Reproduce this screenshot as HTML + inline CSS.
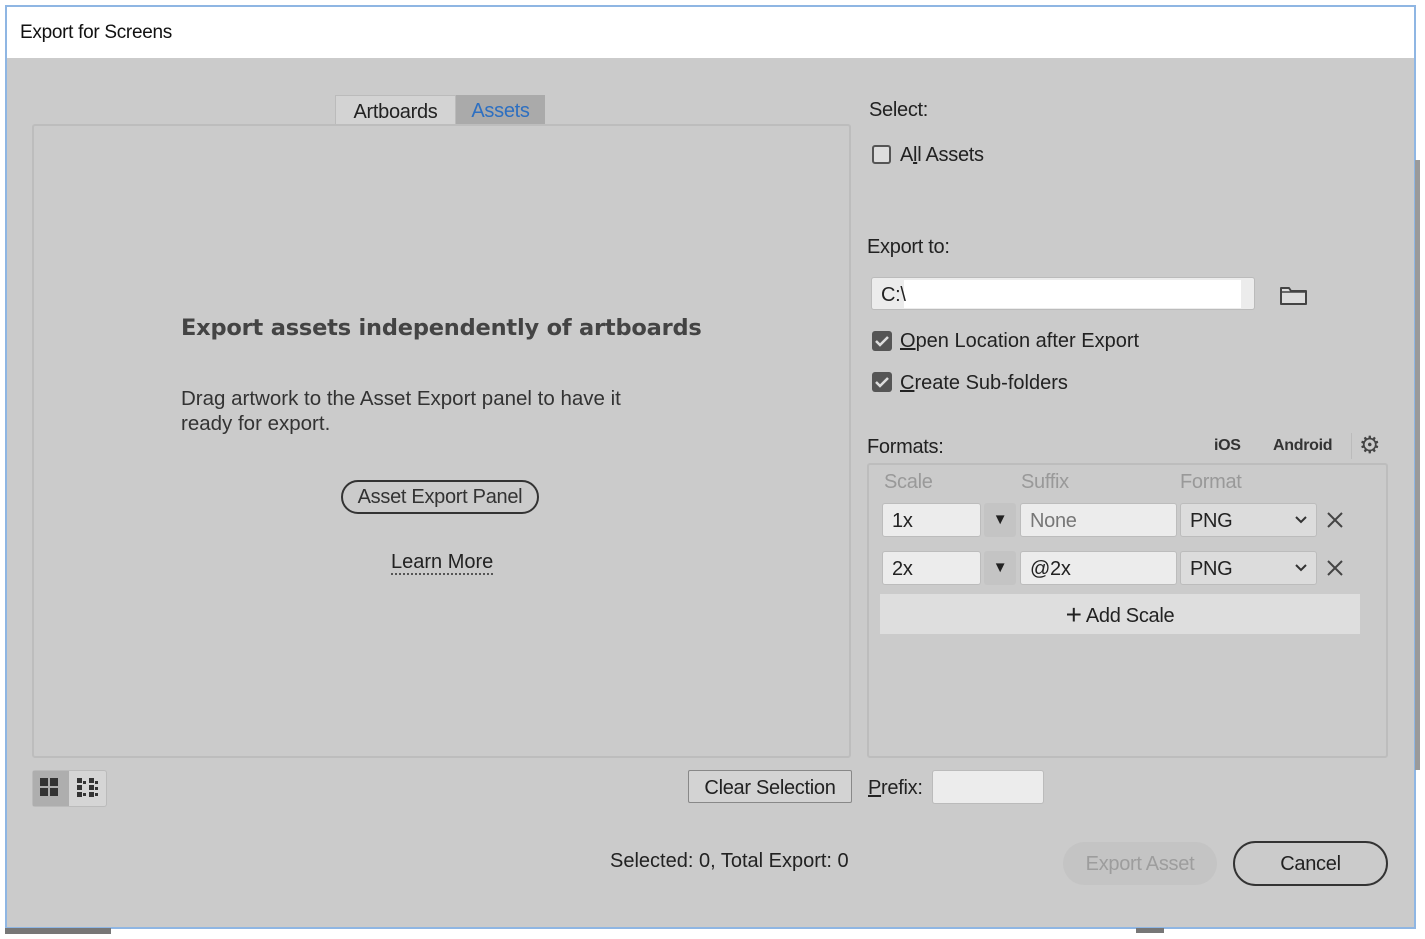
<!DOCTYPE html>
<html><head><meta charset="utf-8"><style>
*{box-sizing:border-box;margin:0;padding:0}
body{width:1425px;height:939px;background:#fff;position:relative;overflow:hidden;font-family:"Liberation Sans",sans-serif;color:#222;font-size:20px;letter-spacing:-0.3px}
.a{position:absolute;white-space:nowrap}
#dlg{position:absolute;left:5px;top:5px;width:1411px;height:924px;border:2px solid #8fb6e3;background:#cbcbcb}
#title{position:absolute;left:0;top:0;width:100%;height:51px;background:#fff}
.box{position:absolute;border:2px solid #bdbdbd;border-radius:3px}
.fld{position:absolute;background:#ececec;border:1px solid #bcbcbc;border-radius:3px;height:34px;line-height:34px;padding-left:9px}
.pill{position:absolute;border:2px solid #333;border-radius:24px;text-align:center}
u{text-decoration:underline}
</style></head><body>
<div id="dlg">
 <div id="title"><div class="a" style="left:13px;top:15px;font-size:19px;color:#111">Export for Screens</div></div>
</div>
<div class="a" style="left:1415px;top:160px;width:5px;height:610px;background:#9a9a9a"></div>
<div class="a" style="left:5px;top:928px;width:106px;height:6px;background:#777"></div>
<div class="a" style="left:1136px;top:928px;width:28px;height:5px;background:#777"></div>

<div class="a" style="left:335px;top:95px;width:121px;height:30px;background:#d3d3d3;border:1px solid #bbb;border-bottom:none;text-align:center;line-height:33px;font-size:20px">Artboards</div>
<div class="a" style="left:456px;top:95px;width:89px;height:30px;background:#aaaaaa;text-align:center;line-height:33px;font-size:20px;color:#2d6fc1">Assets</div>

<div class="box" style="left:32px;top:124px;width:819px;height:634px"></div>
<div class="a" style="left:181px;top:315px;font-family:'DejaVu Sans',sans-serif;font-weight:bold;font-size:22.5px;color:#444;letter-spacing:-0.2px">Export assets independently of artboards</div>
<div class="a" style="left:181px;top:386px;line-height:25px;color:#333;font-size:20.5px;letter-spacing:0">Drag artwork to the Asset Export panel to have it<br>ready for export.</div>
<div class="pill" style="left:341px;top:480px;width:198px;height:34px;line-height:31px;color:#333">Asset Export Panel</div>
<div class="a" style="left:391px;top:551px;color:#222;border-bottom:2px dotted #555;line-height:22px;letter-spacing:0">Learn More</div>

<div class="a" style="left:32px;top:770px;width:75px;height:37px;background:#d5d5d5;border:1px solid #bbb;border-radius:3px"></div>
<div class="a" style="left:33px;top:771px;width:36px;height:35px;background:#aeaeae"></div>
<svg class="a" style="left:39px;top:777px" width="20" height="20"><rect x="1" y="1" width="8" height="8" fill="#333"/><rect x="11" y="1" width="8" height="8" fill="#333"/><rect x="1" y="11" width="8" height="8" fill="#333"/><rect x="11" y="11" width="8" height="8" fill="#333"/></svg>
<svg class="a" style="left:76px;top:777px" width="26" height="20" fill="#333"><rect x="1" y="1" width="5" height="5"/><rect x="1" y="8" width="5" height="5"/><rect x="1" y="15" width="5" height="5"/><rect x="7" y="4" width="3" height="3"/><rect x="7" y="16" width="3" height="3"/><rect x="13" y="1" width="5" height="5"/><rect x="13" y="8" width="5" height="5"/><rect x="13" y="15" width="5" height="5"/><rect x="19" y="4" width="3" height="3"/><rect x="19" y="10" width="3" height="3"/><rect x="19" y="16" width="3" height="3"/></svg>

<div class="a" style="left:688px;top:770px;width:164px;height:33px;border:1px solid #888;background:#d3d3d3;border-radius:2px;text-align:center;line-height:34px;font-size:20px">Clear Selection</div>
<div class="a" style="left:610px;top:850px;font-size:20px;color:#222;letter-spacing:0">Selected: 0, Total Export: 0</div>

<div class="a" style="left:869px;top:99px">Select:</div>
<div class="a" style="left:872px;top:145px;width:19px;height:19px;border:2px solid #555;border-radius:3px;background:#ddd"></div>
<div class="a" style="left:900px;top:144px">A<u>l</u>l Assets</div>
<div class="a" style="left:867px;top:236px">Export to:</div>
<div class="a" style="left:871px;top:277px;width:384px;height:33px;background:#ececec;border:1px solid #bbb;border-radius:3px"></div>
<div class="a" style="left:904px;top:280px;width:337px;height:28px;background:#fff"></div>
<div class="a" style="left:881px;top:284px">C:\</div>
<svg class="a" style="left:1279px;top:284px" width="30" height="22"><path d="M2 4h8l2 3h15v13H2z" fill="#ddd" stroke="#444" stroke-width="2" stroke-linejoin="round"/><path d="M2 8h25" stroke="#444" stroke-width="1.5"/></svg>
<svg class="a" style="left:872px;top:331px" width="20" height="20"><rect x="0" y="0" width="20" height="20" rx="3" fill="#555"/><path d="M4 10l4 4 8-8" stroke="#ddd" stroke-width="2.5" fill="none"/></svg>
<div class="a" style="left:900px;top:330px;letter-spacing:0"><u>O</u>pen Location after Export</div>
<svg class="a" style="left:872px;top:372px" width="20" height="20"><rect x="0" y="0" width="20" height="20" rx="3" fill="#555"/><path d="M4 10l4 4 8-8" stroke="#ddd" stroke-width="2.5" fill="none"/></svg>
<div class="a" style="left:900px;top:372px;letter-spacing:0"><u>C</u>reate Sub-folders</div>

<div class="a" style="left:867px;top:436px">Formats:</div>
<div class="a" style="left:1214px;top:437px;font-size:16px;font-weight:bold;color:#333">iOS</div>
<div class="a" style="left:1273px;top:437px;font-size:16px;font-weight:bold;color:#333">Android</div>
<div class="a" style="left:1351px;top:433px;width:1px;height:26px;background:#bbb"></div>
<div class="a" style="left:1359px;top:431px;font-size:24px;color:#444;letter-spacing:0">⚙</div>

<div class="box" style="left:867px;top:463px;width:521px;height:295px"></div>
<div class="a" style="left:884px;top:471px;color:#999">Scale</div>
<div class="a" style="left:1021px;top:471px;color:#999">Suffix</div>
<div class="a" style="left:1180px;top:471px;color:#999">Format</div>

<div class="fld" style="left:882px;top:503px;width:99px">1x</div>
<div class="a" style="left:984px;top:503px;width:32px;height:34px;background:#c4c4c4;border-radius:3px;text-align:center;line-height:34px;font-size:15px;color:#222">▼</div>
<div class="fld" style="left:1020px;top:503px;width:157px;color:#777">None</div>
<div class="fld" style="left:1180px;top:503px;width:137px;background:#dcdcdc">PNG</div>
<svg class="a" style="left:1294px;top:515px" width="14" height="10"><path d="M2 2l5 5 5-5" stroke="#333" stroke-width="2" fill="none"/></svg>
<svg class="a" style="left:1326px;top:511px" width="18" height="18"><path d="M2 2l14 14M16 2L2 16" stroke="#444" stroke-width="2"/></svg>

<div class="fld" style="left:882px;top:551px;width:99px">2x</div>
<div class="a" style="left:984px;top:551px;width:32px;height:34px;background:#c4c4c4;border-radius:3px;text-align:center;line-height:34px;font-size:15px;color:#222">▼</div>
<div class="fld" style="left:1020px;top:551px;width:157px">@2x</div>
<div class="fld" style="left:1180px;top:551px;width:137px;background:#dcdcdc">PNG</div>
<svg class="a" style="left:1294px;top:563px" width="14" height="10"><path d="M2 2l5 5 5-5" stroke="#333" stroke-width="2" fill="none"/></svg>
<svg class="a" style="left:1326px;top:559px" width="18" height="18"><path d="M2 2l14 14M16 2L2 16" stroke="#444" stroke-width="2"/></svg>

<div class="a" style="left:880px;top:594px;width:480px;height:40px;background:#dedede;text-align:center;line-height:42px"><span style="font-size:28px;vertical-align:-2px">+</span> Add Scale</div>

<div class="a" style="left:868px;top:777px"><u>P</u>refix:</div>
<div class="a" style="left:932px;top:770px;width:112px;height:34px;background:#ececec;border:1px solid #bbb;border-radius:3px"></div>

<div class="a" style="left:1063px;top:842px;width:154px;height:43px;background:#c4c4c4;border-radius:22px;text-align:center;line-height:45px;color:#9d9d9d">Export Asset</div>
<div class="pill" style="left:1233px;top:841px;width:155px;height:45px;line-height:43px;color:#222">Cancel</div>
</body></html>
